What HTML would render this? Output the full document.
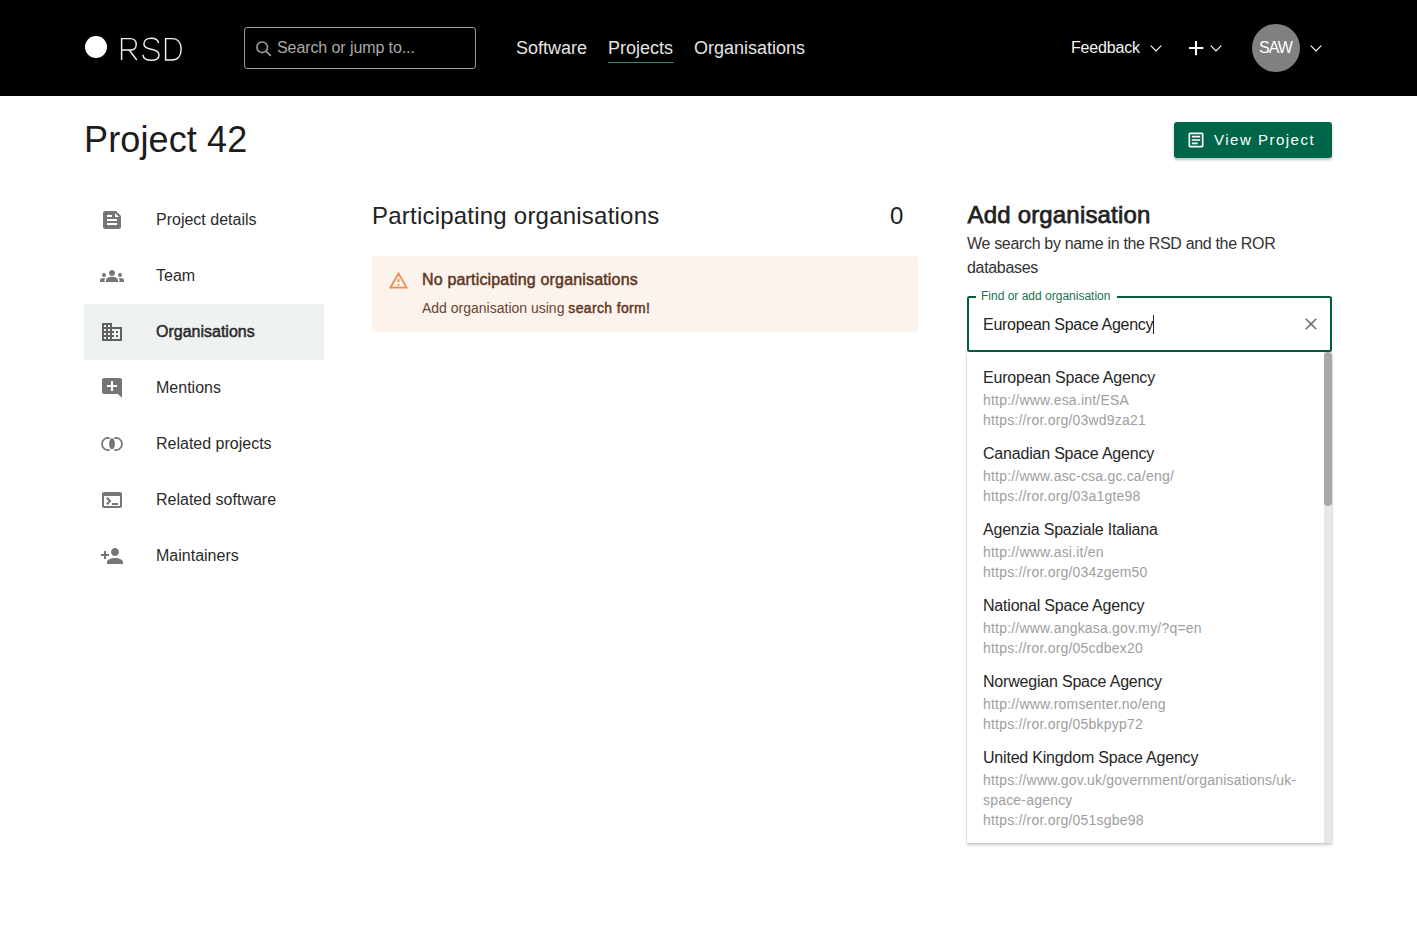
<!DOCTYPE html>
<html><head><meta charset="utf-8">
<style>
*{box-sizing:border-box;margin:0;padding:0}
html,body{width:1417px;height:931px;overflow:hidden;background:#fff}
body{font-family:"Liberation Sans",sans-serif;color:#222;position:relative}
.abs{position:absolute;white-space:nowrap}
#hdr{position:absolute;left:0;top:0;width:1417px;height:96px;background:#000}
svg{display:block}
.nav{font-size:18px;color:#e4e4e4;top:38px;line-height:20px}
.side-ic{position:absolute;left:100px;width:24px;height:24px}
.side-t{position:absolute;left:156px;font-size:16px;color:#2b2b2b;line-height:20px;margin-top:1px}
.org-t{position:absolute;left:983px;font-size:16px;color:#262626;line-height:20px;margin-top:0.8px;letter-spacing:-0.2px}
.org-u{position:absolute;left:983px;font-size:14px;color:#9e9e9e;line-height:20px;margin-top:1px;letter-spacing:0.2px}
</style></head><body>
<div id="hdr">
  <div class="abs" style="left:85px;top:36px;width:22px;height:22px;border-radius:50%;background:#fff"></div>
  <svg class="abs" style="left:0;top:0" width="200" height="96" viewBox="0 0 200 96"><g fill="none" stroke="#f2f2f2" stroke-width="1.45" stroke-linejoin="miter"><path d="M121.6 60V38.6H130C134.1 38.6 136.2 41.1 136.2 44.4C136.2 47.8 134 50 130 50H121.6M129.2 50L136.8 60"/><path d="M158.6 43C158 40.2 155.4 38.3 151.2 38.3C146.8 38.3 143.9 40.6 143.9 44C143.9 47.4 146.8 48.5 151 49.2C156 50 159 51.6 159 55C159 58.4 156 60.3 151.2 60.3C146.6 60.3 143.4 58.3 142.9 54.8"/><path d="M165.6 38.6V60H172C177.8 60 181.1 55.8 181.1 49.3C181.1 42.8 177.8 38.6 172 38.6Z"/></g></svg>
  <div class="abs" style="left:244px;top:27px;width:232px;height:42px;border:1px solid #999;border-radius:3px"></div>
  <svg class="abs" style="left:250px;top:36px" width="28" height="28" viewBox="0 0 28 28"><g fill="none" stroke="#a0a0a0" stroke-width="1.6"><circle cx="12.2" cy="11.3" r="5.3"/><path d="M16 15.2L20.8 19.8"/></g></svg>
  <div class="abs" style="left:277px;top:38px;font-size:16px;color:#aaa;line-height:20px;letter-spacing:-0.09px">Search or jump to...</div>
  <div class="abs nav" style="left:516px">Software</div>
  <div class="abs nav" style="left:608px">Projects</div>
  <div class="abs" style="left:608px;top:61.5px;width:66px;height:1.6px;background:#3f7f62"></div>
  <div class="abs nav" style="left:694px">Organisations</div>
  <div class="abs" style="left:1071px;top:38px;font-size:16px;color:#f4f4f4;line-height:20px;letter-spacing:-0.17px">Feedback</div>
  <svg class="abs" style="left:1148px;top:42px" width="16" height="12" viewBox="0 0 16 12"><path d="M2.7 3.6L8 8.9L13.3 3.6" fill="none" stroke="#fff" stroke-width="1.15"/></svg>
  <svg class="abs" style="left:1186px;top:38px" width="20" height="20" viewBox="0 0 20 20"><path d="M10 3v14.2M3 10h14.4" stroke="#fff" stroke-width="2.1"/></svg>
  <svg class="abs" style="left:1208px;top:42px" width="16" height="12" viewBox="0 0 16 12"><path d="M2.7 3.6L8 8.9L13.3 3.6" fill="none" stroke="#fff" stroke-width="1.15"/></svg>
  <div class="abs" style="left:1252px;top:24px;width:48px;height:48px;border-radius:50%;background:#808080;color:#fff;font-size:16px;line-height:48px;text-align:center;letter-spacing:-0.9px;text-indent:-1px">SAW</div>
  <svg class="abs" style="left:1308px;top:42px" width="16" height="12" viewBox="0 0 16 12"><path d="M2.7 3.6L8 8.9L13.3 3.6" fill="none" stroke="#fff" stroke-width="1.15"/></svg>
</div>

<div class="abs" style="left:84px;top:119px;font-size:36px;line-height:42px;color:#1c1c1c;letter-spacing:0.12px">Project 42</div>

<div class="abs" style="left:1174px;top:122px;width:158px;height:36px;background:#006649;border-radius:3px;box-shadow:0 2px 3px rgba(0,0,0,.25)"></div>
<svg class="abs" style="left:1186px;top:130px" width="20" height="20" viewBox="0 0 24 24"><path fill="#fff" d="M19 5v14H5V5h14m0-2H5c-1.1 0-2 .9-2 2v14c0 1.1.9 2 2 2h14c1.1 0 2-.9 2-2V5c0-1.1-.9-2-2-2z M14 17H7v-2h7v2zm3-4H7v-2h10v2zm0-4H7V7h10v2z"/></svg>
<div class="abs" style="left:1214px;top:131px;font-size:15px;color:#fff;letter-spacing:1.5px;line-height:18px">View Project</div>

<!-- sidebar -->
<div class="abs" style="left:84px;top:304px;width:240px;height:56px;background:#eef2f1"></div>
<svg class="side-ic" style="top:208px" viewBox="0 0 24 24"><path fill="#757575" d="M16 3H5c-1.1 0-2 .9-2 2v14c0 1.1.9 2 2 2h14c1.1 0 2-.9 2-2V8l-5-5zM7 7h5v2H7V7zm10 10H7v-2h10v2zm0-4H7v-2h10v2zm-2-4V5l4 4h-4z"/></svg>
<svg class="side-ic" style="top:264px" viewBox="0 0 24 24"><path fill="#757575" d="M12 12.75c1.63 0 3.07.39 4.24.9 1.08.48 1.76 1.56 1.76 2.73V18H6v-1.61c0-1.18.68-2.26 1.76-2.73 1.17-.52 2.61-.91 4.24-.91zM4 13c1.1 0 2-.9 2-2s-.9-2-2-2-2 .9-2 2 .9 2 2 2zm1.13 1.1c-.37-.06-.74-.1-1.13-.1-.99 0-1.930.21-2.78.58C.48 14.9 0 15.62 0 16.43V18h4.5v-1.61c0-.83.23-1.61.63-2.29zM20 13c1.1 0 2-.9 2-2s-.9-2-2-2-2 .9-2 2 .9 2 2 2zm4 3.43c0-.81-.48-1.53-1.22-1.85-.85-.37-1.79-.58-2.78-.58-.39 0-.76.04-1.13.1.4.68.63 1.46.63 2.29V18H24v-1.57zM12 6c1.66 0 3 1.34 3 3s-1.34 3-3 3-3-1.34-3-3 1.34-3 3-3z"/></svg>
<svg class="side-ic" style="top:320px" viewBox="0 0 24 24"><path fill="#616161" d="M12 7V3H2v18h20V7H12zM6 19H4v-2h2v2zm0-4H4v-2h2v2zm0-4H4V9h2v2zm0-4H4V5h2v2zm4 12H8v-2h2v2zm0-4H8v-2h2v2zm0-4H8V9h2v2zm0-4H8V5h2v2zm10 12h-8v-2h2v-2h-2v-2h2v-2h-2V9h8v10zm-2-8h-2v2h2v-2zm0 4h-2v2h2v-2z"/></svg>
<svg class="side-ic" style="top:376px" viewBox="0 0 24 24"><path fill="#757575" d="M22 4c0-1.1-.9-2-2-2H4c-1.1 0-1.99.9-1.99 2L2 16c0 1.1.9 2 2 2h14l4 4V4zm-5 7h-4v4h-2v-4H7V9h4V5h2v4h4v2z"/></svg>
<svg class="side-ic" style="top:432px" viewBox="0 0 24 24"><g fill="none" stroke="#757575" stroke-width="1.75"><path d="M9.6 6.1A6.1 6.1 0 1 0 9.6 17.9"/><path d="M14.4 6.1A6.1 6.1 0 1 1 14.4 17.9"/></g><ellipse cx="12" cy="11.8" rx="2.9" ry="5.7" fill="#757575"/></svg>
<svg class="side-ic" style="top:488px" viewBox="0 0 24 24"><path fill="#757575" d="M20 4H4c-1.11 0-2 .9-2 2v12c0 1.1.89 2 2 2h16c1.1 0 2-.9 2-2V6c0-1.1-.89-2-2-2zm0 14H4V8h16v10zm-2-1h-6v-2h6v2zM7.5 17l-1.41-1.41L8.67 13l-2.59-2.59L7.5 9l4 4-4 4z"/></svg>
<svg class="side-ic" style="top:544px" viewBox="0 0 24 24"><path fill="#757575" d="M15 12c2.21 0 4-1.79 4-4s-1.79-4-4-4-4 1.79-4 4 1.79 4 4 4zm-9-2V7H4v3H1v2h3v3h2v-3h3v-2H6zm9 4c-2.67 0-8 1.34-8 4v2h16v-2c0-2.66-5.33-4-8-4z"/></svg>

<div class="side-t" style="top:209px">Project details</div>
<div class="side-t" style="top:265px">Team</div>
<div class="side-t" style="top:321px;-webkit-text-stroke:0.5px #2b2b2b;color:#2b2b2b">Organisations</div>
<div class="side-t" style="top:377px">Mentions</div>
<div class="side-t" style="top:433px">Related projects</div>
<div class="side-t" style="top:489px">Related software</div>
<div class="side-t" style="top:545px">Maintainers</div>

<!-- participating -->
<div class="abs" style="left:372px;top:202px;font-size:24px;line-height:28px;color:#222;letter-spacing:0.22px">Participating organisations</div>
<div class="abs" style="left:890px;top:202px;font-size:24px;line-height:28px;color:#222">0</div>
<div class="abs" style="left:372px;top:256px;width:546px;height:76px;background:#fdf3ed;border-radius:3px"></div>
<div class="abs" style="left:422px;top:270px;font-size:16px;color:#5f371e;-webkit-text-stroke:0.5px #5f371e;line-height:20px;letter-spacing:0.17px">No participating organisations</div>
<div class="abs" style="left:422px;top:298px;font-size:14px;color:#664631;line-height:20px;letter-spacing:0px">Add organisation using <span style="-webkit-text-stroke:0.45px #5f371e;color:#5f371e;letter-spacing:0.35px">search form!</span></div>

<!-- add organisation -->
<div class="abs" style="left:967.6px;top:200.3px;font-size:24px;line-height:30px;color:#222;-webkit-text-stroke:0.75px #222;letter-spacing:0.17px">Add organisation</div>
<div class="abs" style="left:967px;top:231.7px;font-size:16px;line-height:24px;color:#333;white-space:normal;width:340px;letter-spacing:-0.33px">We search by name in the RSD and the ROR databases</div>

<div class="abs" style="left:967px;top:296px;width:365px;height:56px;border:2px solid #005c40;border-radius:2.5px"></div>
<div class="abs" style="left:976px;top:289px;padding:0 6.5px 0 5px;background:#fff;font-size:12px;color:#1a7050;line-height:14px">Find or add organisation</div>
<div class="abs" style="left:983px;top:315px;font-size:16px;line-height:20px;color:#222;letter-spacing:-0.28px">European Space Agency</div>

<svg class="abs" style="left:388.3px;top:270px" width="21" height="21" viewBox="0 0 24 24"><path fill="#ed8a4c" d="M12 5.99L19.53 19H4.47L12 5.99M12 2L1 21h22L12 2zm1 14h-2v2h2v-2zm0-6h-2v4h2v-4z"/></svg>
<svg class="abs" style="left:1300.8px;top:313.8px" width="20" height="20" viewBox="0 0 24 24"><path fill="#757575" d="M19 6.41L17.59 5 12 10.59 6.41 5 5 6.41 10.59 12 5 17.59 6.41 19 12 13.41 17.59 19 19 17.59 13.41 12z"/></svg>
<div class="abs" style="left:1153px;top:315px;width:1px;height:19px;background:#222"></div>
<!-- dropdown -->
<div class="abs" style="left:967px;top:352px;width:365px;height:491px;background:#fff;box-shadow:0 2px 3px rgba(0,0,0,.2),0 0 1px rgba(0,0,0,.3)"></div>
<div class="abs" style="left:1324px;top:352px;width:8px;height:491px;background:#e8e8e8"></div>
<div class="abs" style="left:1324px;top:352px;width:8px;height:154px;background:#a8a8a8;border-radius:4px"></div>

<div class="org-t" style="top:367px">European Space Agency</div>
<div class="org-u" style="top:389px">http://www.esa.int/ESA</div>
<div class="org-u" style="top:409px">https://ror.org/03wd9za21</div>
<div class="org-t" style="top:443px">Canadian Space Agency</div>
<div class="org-u" style="top:465px">http://www.asc-csa.gc.ca/eng/</div>
<div class="org-u" style="top:485px">https://ror.org/03a1gte98</div>
<div class="org-t" style="top:519px">Agenzia Spaziale Italiana</div>
<div class="org-u" style="top:541px">http://www.asi.it/en</div>
<div class="org-u" style="top:561px">https://ror.org/034zgem50</div>
<div class="org-t" style="top:595px">National Space Agency</div>
<div class="org-u" style="top:617px">http://www.angkasa.gov.my/?q=en</div>
<div class="org-u" style="top:637px">https://ror.org/05cdbex20</div>
<div class="org-t" style="top:671px">Norwegian Space Agency</div>
<div class="org-u" style="top:693px">http://www.romsenter.no/eng</div>
<div class="org-u" style="top:713px">https://ror.org/05bkpyp72</div>
<div class="org-t" style="top:747px">United Kingdom Space Agency</div>
<div class="org-u" style="top:769px">https://www.gov.uk/government/organisations/uk-</div>
<div class="org-u" style="top:789px">space-agency</div>
<div class="org-u" style="top:809px">https://ror.org/051sgbe98</div>
</body></html>
